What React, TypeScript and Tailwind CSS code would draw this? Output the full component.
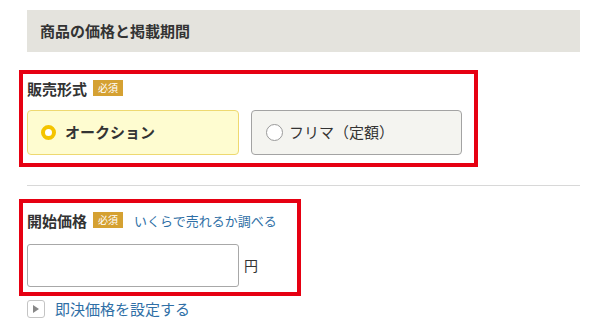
const Badge = () => (
  <span className="ml-[6px] inline-flex h-[16px] w-[30px] items-center justify-center bg-[#d5a132] text-[10px] leading-none text-white">
    必須
  </span>
)

export default function App() {
  return (
    <div
      className="h-[330px] w-[605px] overflow-hidden bg-white text-[#333]"
      style={{ fontFamily: '"Noto Sans CJK JP", "Noto Sans", sans-serif' }}
    >
      <div className="ml-[27px] mt-[10px] flex h-[42px] w-[553px] items-center bg-[#e4e3dd] pl-[13px] text-[15px] font-bold">
        商品の価格と掲載期間
      </div>

      <div className="ml-[19px] mt-[18px] h-[97px] w-[459px] border-4 border-[#e60012] pl-[4px] pt-[4px]">
        <div className="flex h-[20px] items-center">
          <span className="text-[15px] font-bold leading-none">販売形式</span>
          <Badge />
        </div>
        <div className="mt-[12px] flex gap-[12px]">
          <div className="flex h-[45px] w-[212px] items-center rounded-[4px] border border-[#eed970] bg-[#fefcd0] pl-[13px]">
            <span className="h-[15px] w-[15px] rounded-full border-[4px] border-[#f4c400] bg-white" />
            <span className="ml-[9px] text-[15px] font-bold">オークション</span>
          </div>
          <div className="flex h-[45px] w-[211px] items-center rounded-[4px] border border-[#a3a3a3] bg-[#f4f4f0] pl-[14px]">
            <span className="h-[17px] w-[17px] rounded-full border border-[#9a9a9a] bg-white" />
            <span className="ml-[6px] text-[15px]">フリマ（定額）</span>
          </div>
        </div>
      </div>

      <div className="ml-[27px] mt-[18px] h-px w-[553px] bg-[#d8d8d8]" />

      <div className="ml-[19px] mt-[13px] h-[97px] w-[282px] border-4 border-[#e60012] pl-[4px] pt-[7px]">
        <div className="flex h-[20px] items-center">
          <span className="text-[15px] font-bold leading-none">開始価格</span>
          <Badge />
          <span className="ml-[11px] text-[13px] leading-none text-[#2f6fa6]">いくらで売れるか調べる</span>
        </div>
        <div className="mt-[14px] flex items-center">
          <div className="h-[43px] w-[212px] rounded-[3px] border border-[#a8a8a8] bg-white" />
          <span className="ml-[5px] text-[14px]">円</span>
        </div>
      </div>

      <div className="ml-[27px] mt-[2px] flex items-center">
        <span className="flex h-[18px] w-[18px] items-center justify-center rounded-[3px] border border-[#c4c4c4] bg-white">
          <svg width="6" height="8" viewBox="0 0 6 8">
            <path d="M0 0 L6 4 L0 8 Z" fill="#888" />
          </svg>
        </span>
        <span className="ml-[10px] text-[15px] text-[#2f6fa6]">即決価格を設定する</span>
      </div>
    </div>
  )
}
